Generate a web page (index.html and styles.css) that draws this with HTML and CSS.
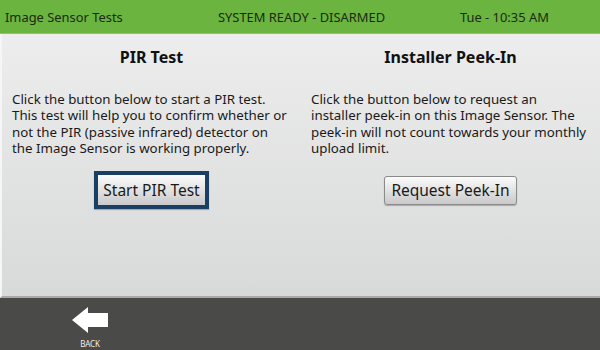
FILE: index.html
```html
<!DOCTYPE html>
<html lang="en">
<head>
  <meta charset="UTF-8">
  <meta name="viewport" content="width=device-width, initial-scale=1.0">
  <title>Image Sensor Tests</title>
  <link rel="stylesheet" href="styles.css">
</head>
<body>

  <div class="screen">
    <div class="status-bar">
      <span class="page-name">Image Sensor Tests</span>
      <span class="system-state">SYSTEM READY - DISARMED</span>
      <span class="clock">Tue - 10:35 AM</span>
    </div>

    <div class="content">
      <div class="panel">
        <h2>PIR Test</h2>
        <p>Click the button below to start a PIR test. This test will help you to confirm whether or not the PIR (passive infrared) detector on the Image Sensor is working properly.</p>
        <div class="actions">
          <button class="btn btn-focused">Start PIR Test</button>
        </div>
      </div>
      <div class="panel">
        <h2>Installer Peek-In</h2>
        <p>Click the button below to request an installer peek-in on this Image Sensor. The peek-in will not count towards your monthly upload limit.</p>
        <div class="actions">
          <button class="btn">Request Peek-In</button>
        </div>
      </div>
    </div>

    <div class="footer">
      <div class="back">
        <svg width="36" height="26" viewBox="0 0 36 26">
          <path d="M0 13 L16 0 L16 6 L36 6 L36 20 L16 20 L16 26 Z" fill="#fff"/>
        </svg>
        <span>BACK</span>
      </div>
    </div>
  </div>

</body>
</html>
```

FILE: styles.css
```css
body {
  margin: 0;
  font-family: "Noto Sans", "Open Sans", sans-serif;
}
.screen {
  width: 600px;
  height: 350px;
  display: flex;
  flex-direction: column;
  overflow: hidden;
}
.status-bar {
  height: 33px;
  background-color: #6ab43f;
  border-bottom: 1px solid #8cc566;
  display: flex;
  align-items: center;
  font-size: 12.9px;
  color: #1c2a14;
  padding: 0 5px;
}
.page-name {
  width: 213px;
}
.system-state {
  width: 242px;
}
.content {
  flex: 1;
  display: flex;
  background: linear-gradient(#ededed, #d8d9d9);
  border-left: 2px solid #f6f6f6;
  border-bottom: 2px solid #a9a9a9;
}
.panel {
  width: 300px;
  padding: 0 10px;
  box-sizing: border-box;
}
h2 {
  margin: 12px 0 0;
  text-align: center;
  font-size: 16px;
  font-weight: bold;
  color: #111;
  line-height: 22px;
}
p {
  margin: 23px 0 0;
  font-size: 13.3px;
  line-height: 16.3px;
  color: #1a1a1a;
}
.actions {
  text-align: center;
  margin-top: 15px;
}
.panel:last-child .actions {
  margin-top: 20px;
}
.btn {
  font-family: inherit;
  font-size: 15.5px;
  color: #1a1a1a;
  padding: 2px 6px 3px;
  border: 1px solid #8a8a8a;
  border-radius: 3px;
  background: linear-gradient(#fbfbfb, #c9c9cb);
  box-shadow: 0 1px 1px rgba(0, 0, 0, 0.25);
}
.btn-focused {
  border: 4px solid #1b3e63;
  border-radius: 0;
  padding: 4px 5px 4px;
}
.footer {
  height: 52px;
  background-color: #4a4a48;
}
.back {
  width: 60px;
  margin-left: 60px;
  display: flex;
  flex-direction: column;
  align-items: center;
  padding-top: 9px;
}
.back span {
  margin-top: 5px;
  font-size: 8px;
  color: #eee;
  letter-spacing: -0.2px;
}
```
